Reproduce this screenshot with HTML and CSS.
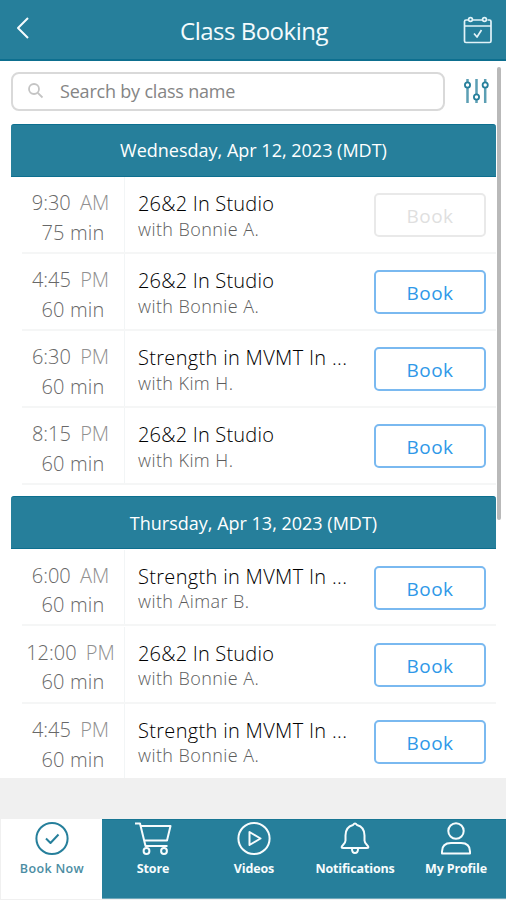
FILE: index.html
```
<!DOCTYPE html>
<html lang="en">
<head>
<meta charset="utf-8">
<title>Class Booking</title>
<link rel="stylesheet" href="styles.css">
</head>
<body>
<div class="app">
  <header class="topbar">
    <svg class="back" width="16" height="24" viewBox="0 0 16 24"><path d="M13 2 3 12l10 10"/></svg>
    <h1>Class Booking</h1>
    <svg class="calendar" width="30" height="30" viewBox="0 0 30 30"><path d="M5 4H3Q1.500 4 1.500 5.500V25Q1.500 26.500 3 26.500H26.500Q28 26.500 28 25V5.500Q28 4 26.500 4H24.500M9.500 4H20M1.500 10H28"/><circle cx="7.500" cy="3.500" r="1.900"/><circle cx="21.500" cy="3.500" r="1.900"/><path d="m11 17.500 3 3.500 4.500-7"/></svg>
  </header>
  <main class="content">
    <div class="search">
      <label class="field">
        <svg width="18" height="18" viewBox="0 0 18 18"><circle cx="7" cy="7" r="5"/><path d="m10.800 10.800 4.700 4.700"/></svg>
        <span>Search by class name</span>
      </label>
      <svg class="filter" width="26" height="26" viewBox="0 0 26 26"><path class="bars" d="M4.500 1v24M13.500 1v24M22.200 1v24"/><circle cx="4.500" cy="7" r="2.600"/><circle cx="13.500" cy="19" r="2.600"/><circle cx="22.200" cy="7" r="2.600"/></svg>
    </div>
    <section class="day">
      <h2>Wednesday, Apr 12, 2023 (MDT)</h2>
      <div class="row"><div class="when"><p class="time">9:30 <i>AM</i></p><p class="mins">75 min</p></div><div class="what"><p class="name">26&amp;2 In Studio</p><p class="by">with Bonnie A.</p></div><button class="book off">Book</button></div>
      <div class="row"><div class="when"><p class="time">4:45 <i>PM</i></p><p class="mins">60 min</p></div><div class="what"><p class="name">26&amp;2 In Studio</p><p class="by">with Bonnie A.</p></div><button class="book">Book</button></div>
      <div class="row"><div class="when"><p class="time">6:30 <i>PM</i></p><p class="mins">60 min</p></div><div class="what"><p class="name long">Strength in MVMT In ...</p><p class="by">with Kim H.</p></div><button class="book">Book</button></div>
      <div class="row"><div class="when"><p class="time">8:15 <i>PM</i></p><p class="mins">60 min</p></div><div class="what"><p class="name">26&amp;2 In Studio</p><p class="by">with Kim H.</p></div><button class="book">Book</button></div>
    </section>
    <section class="day next">
      <h2>Thursday, Apr 13, 2023 (MDT)</h2>
      <div class="row"><div class="when"><p class="time">6:00 <i>AM</i></p><p class="mins">60 min</p></div><div class="what"><p class="name long">Strength in MVMT In ...</p><p class="by">with Aimar B.</p></div><button class="book">Book</button></div>
      <div class="row"><div class="when"><p class="time">12:00 <i>PM</i></p><p class="mins">60 min</p></div><div class="what"><p class="name">26&amp;2 In Studio</p><p class="by">with Bonnie A.</p></div><button class="book">Book</button></div>
      <div class="row"><div class="when"><p class="time">4:45 <i>PM</i></p><p class="mins">60 min</p></div><div class="what"><p class="name long">Strength in MVMT In ...</p><p class="by">with Bonnie A.</p></div><button class="book">Book</button></div>
    </section>
    <div class="scrollbar"></div>
  </main>
  <nav class="tabs">
    <a class="tab active"><svg width="38" height="36" viewBox="0 0 38 36"><circle cx="19" cy="18.500" r="15.600"/><path d="m13 18.500 4.500 4.500 8-8.500"/></svg><span>Book Now</span></a>
    <a class="tab"><svg width="38" height="36" viewBox="0 0 38 36"><path d="M1 3.500h5l5.500 22.500H33.500M7.500 6H36.500l-3.500 14.500H10.500"/><circle cx="12.500" cy="31" r="2.900"/><circle cx="30" cy="31" r="2.900"/></svg><span>Store</span></a>
    <a class="tab"><svg width="38" height="36" viewBox="0 0 38 36"><circle cx="19" cy="18.500" r="15.600"/><path d="m14.500 12 11 6.500-11 6.500z"/></svg><span>Videos</span></a>
    <a class="tab"><svg width="38" height="36" viewBox="0 0 38 36"><path d="M17 5q2-3 4 0 7.500 2 7.500 10.500v5q0 2 2.500 4.500 3 3-.5 3h-23q-3.500 0-.5-3 2.500-2.500 2.500-4.500v-5Q9.500 7 17 5zM16 29q0 4 3 4t3-4"/></svg><span>Notifications</span></a>
    <a class="tab"><svg width="38" height="36" viewBox="0 0 38 36"><circle cx="19" cy="11" r="7.700"/><path d="M5 33.500v-2q0-8.500 9-8.500h10q9 0 9 8.500v2z"/></svg><span>My Profile</span></a>
  </nav>
</div>
</body>
</html>
```
FILE: styles.css
```
* { box-sizing: border-box; margin: 0; padding: 0; }
body { font-family: "Open Sans", "Noto Sans", sans-serif; background: #fff; }
svg { fill: none; stroke: currentColor; stroke-width: 2; stroke-linejoin: round; flex: none; }
.app { width: 506px; height: 900px; display: flex; flex-direction: column; background: #f0f0f0; overflow: hidden; }

.topbar { height: 61px; flex: none; display: flex; align-items: flex-start; justify-content: space-between; padding: 15px 13px 0 15px; background: #267f9b; border-bottom: 2px solid #0d6f8f; color: #f4fbfd; }
.topbar h1 { font-size: 24px; line-height: 32px; font-weight: 400; letter-spacing: -.5px; }
.back { width: 16px; margin: 1px 14px 0 0; }
.calendar { margin-top: 1px; stroke-width: 1.7; color: #e2f3f8; }

.content { position: relative; height: 717px; flex: none; background: #fff; padding: 11px 10px 0 11px; overflow: hidden; }
.search { display: flex; align-items: flex-start; gap: 18px; height: 52px; }
.field { width: 434px; height: 39px; border: 2px solid #d9d9d9; border-radius: 8px; display: flex; align-items: center; gap: 15px; padding: 0 0 2px 14px; font-size: 18px; color: #858585; }
.field svg { color: #c4c4c4; stroke-width: 1.800; }
.field span { letter-spacing: -.2px; }
.filter { margin-top: 6px; color: #267f9b; stroke-width: 1.800; }
.filter .bars { stroke-width: 2.500; color: #5c9fb4; }
.filter circle { fill: #fff; }

.day { margin-bottom: 11px; }
.day h2 { height: 53px; background: #267f9b; border-top: 1px solid #0d6f8f; border-bottom: 1px solid #0d6f8f; border-radius: 3px 3px 0 0; color: #fff; font-size: 18px; line-height: 51px; font-weight: 400; text-align: center; }
.next h2 { line-height: 53px; }
.row { display: flex; height: 77px; margin-left: 11px; border-bottom: 2px solid #f5f6f6; }
.next .row { height: 77.400px; padding-top: .6px; }
.when { width: 103px; border-right: 1px solid #f2f5f6; text-align: center; font-size: 20px; font-weight: 300; line-height: 29.500px; color: #686868; padding-top: 11px; }
.time { white-space: pre; padding-right: 5px; }
.time i { font-style: normal; color: #909090; margin-left: 4px; }
.mins { letter-spacing: .2px; }
.what { width: 249px; padding: 14px 0 0 13px; white-space: nowrap; }
.name { font-size: 20px; line-height: 26px; font-weight: 300; color: #000; letter-spacing: .2px; }
.name.long { letter-spacing: .32px; }
.by { font-size: 18px; line-height: 24px; font-weight: 300; color: #5c5c5c; letter-spacing: .42px; }
.next .by { line-height: 23px; }
.book { width: 112px; height: 44px; margin-top: 16px; border: 2px solid #7ab9f0; border-radius: 5px; background: #fff; color: #2f98e8; font: 400 19px/42px "Open Sans", sans-serif; letter-spacing: .5px; }
.book.off { border-color: #e9e9e9; color: #dfdfdf; }
.scrollbar { position: absolute; right: 5px; top: 6px; width: 4px; height: 453px; border-radius: 2px; background: #b9b9b9; }

.tabs { display: flex; height: 80px; margin-top: 41px; background: #267f9b; border-top: 1px solid #187693; border-bottom: 1px solid #6fa9bb; color: #f7fcfd; }
.tab { flex: 1; display: flex; flex-direction: column; align-items: center; padding-left: 1px; font-size: 12.500px; font-weight: 700; line-height: 20px; letter-spacing: -.15px; white-space: nowrap; }
.tab span { margin-top: 3px; }
.tab.active { flex: 0 0 102px; margin: -1px 0; padding-top: 1px; background: #fff; color: #267f9b; font-weight: 600; letter-spacing: .35px; border-left: 1px solid #f0f0f0; }
.tab.active span { color: #4b8da3; }
```
